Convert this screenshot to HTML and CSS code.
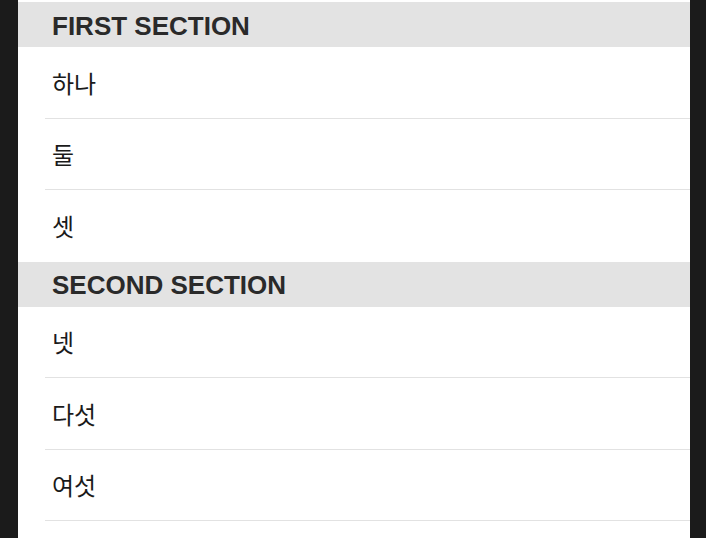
FILE: index.html
```html
<!DOCTYPE html>
<html lang="ko">
<head>
<meta charset="utf-8">
<link rel="stylesheet" href="styles.css">
</head>
<body>
<div class="panel">
  <section class="section first">
    <div class="header">FIRST SECTION</div>
    <div class="row"><span>하나</span></div>
    <div class="row"><span>둘</span></div>
    <div class="row"><span>셋</span></div>
  </section>
  <section class="section">
    <div class="header">SECOND SECTION</div>
    <div class="row"><span>넷</span></div>
    <div class="row"><span>다섯</span></div>
    <div class="row"><span>여섯</span></div>
  </section>
</div>
</body>
</html>
```

FILE: styles.css
```css
html, body {
  margin: 0;
  padding: 0;
  background: #1b1b1b;
  height: 100%;
  overflow: hidden;
}
.panel {
  margin: 0 16px 0 18px;
  background: #ffffff;
  padding-top: 2px;
  min-height: 538px;
}
.header {
  height: 45px;
  background: #e3e3e3;
  display: flex;
  align-items: center;
  padding-left: 34px;
  font-family: "Liberation Sans", Arial, sans-serif;
  font-weight: 700;
  font-size: 26px;
  color: #2a2a2a;
  box-sizing: border-box;
  padding-top: 3px;
}
.row {
  height: 71.5px;
  box-sizing: border-box;
  margin-left: 27px;
  padding-left: 7px;
  display: flex;
  align-items: center;
  border-bottom: 1px solid #e2e2e2;
  font-family: "Noto Sans CJK KR", "Noto Sans", sans-serif;
  font-size: 24px;
  color: #1a1a1a;
}
.first .row:last-child {
  border-bottom: none;
}
```
